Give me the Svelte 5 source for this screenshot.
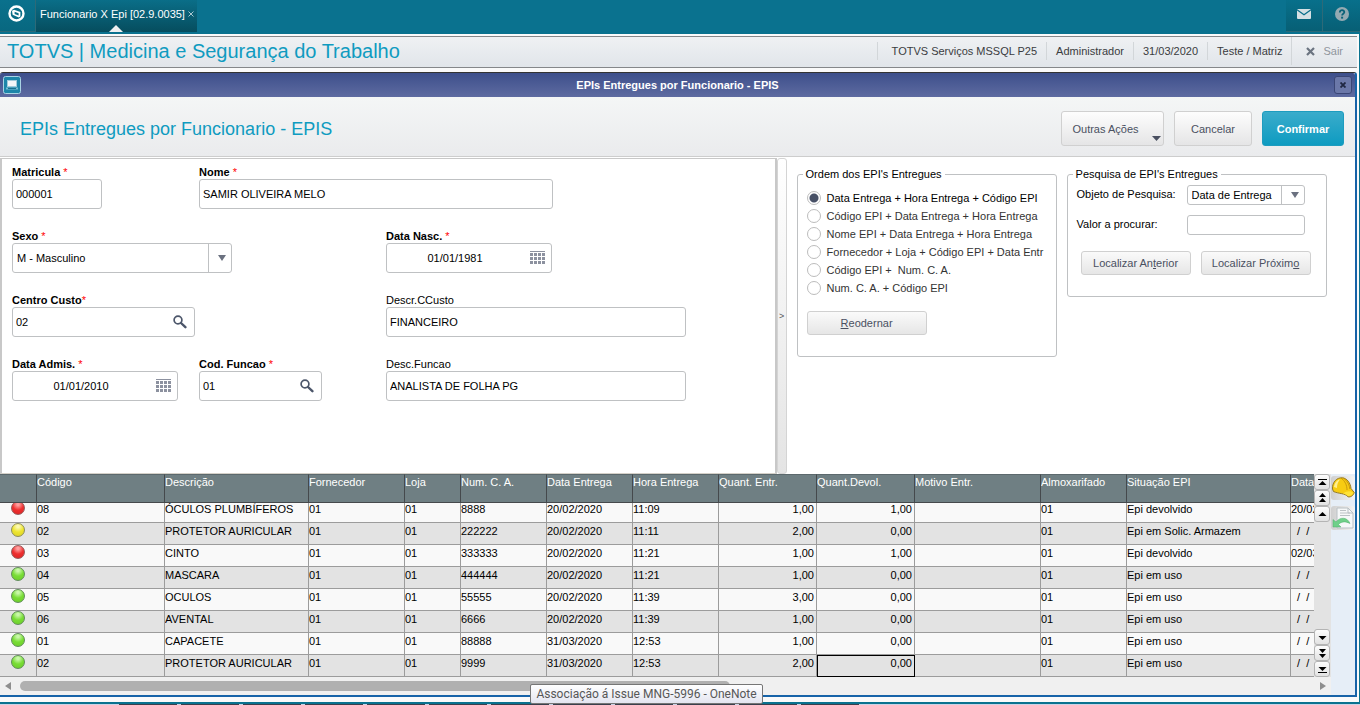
<script lang="ts">
    import { onMount } from "svelte";

    const session = [
        "TOTVS Serviços MSSQL P25",
        "Administrador",
        "31/03/2020",
        "Teste / Matriz",
    ];

    const orders = [
        "Data Entrega + Hora Entrega + Código EPI",
        "Código EPI + Data Entrega + Hora Entrega",
        "Nome EPI + Data Entrega + Hora Entrega",
        "Fornecedor + Loja + Código EPI + Data Entr",
        "Código EPI +\u00a0 Num. C. A.",
        "Num. C. A. + Código EPI",
    ];
    let order = $state(orders[0]);

    const columns = [
        { title: "", width: 37 },
        { title: "Código", width: 128 },
        { title: "Descrição", width: 144 },
        { title: "Fornecedor", width: 96 },
        { title: "Loja", width: 56 },
        { title: "Num. C. A.", width: 86 },
        { title: "Data Entrega", width: 86 },
        { title: "Hora Entrega", width: 86 },
        { title: "Quant. Entr.", width: 98 },
        { title: "Quant.Devol.", width: 98 },
        { title: "Motivo Entr.", width: 126 },
        { title: "Almoxarifado", width: 86 },
        { title: "Situação EPI", width: 164 },
        { title: "Data Devol.", width: 86 },
    ];
    const tableWidth = columns.reduce((sum, c) => sum + c.width, 0);

    const none = "\u00a0 /\u00a0 /";
    const rows = [
        ["red", "08", "ÓCULOS PLUMBÍFEROS", "01", "01", "8888", "20/02/2020", "11:09", "1,00", "1,00", "", "01", "Epi devolvido", "20/02/2020"],
        ["yellow", "02", "PROTETOR AURICULAR", "01", "01", "222222", "20/02/2020", "11:11", "2,00", "0,00", "", "01", "Epi em Solic. Armazem", none],
        ["red", "03", "CINTO", "01", "01", "333333", "20/02/2020", "11:21", "1,00", "1,00", "", "01", "Epi devolvido", "02/03/2020"],
        ["green", "04", "MASCARA", "01", "01", "444444", "20/02/2020", "11:21", "1,00", "0,00", "", "01", "Epi em uso", none],
        ["green", "05", "OCULOS", "01", "01", "55555", "20/02/2020", "11:39", "3,00", "0,00", "", "01", "Epi em uso", none],
        ["green", "06", "AVENTAL", "01", "01", "6666", "20/02/2020", "11:39", "1,00", "0,00", "", "01", "Epi em uso", none],
        ["green", "01", "CAPACETE", "01", "01", "88888", "31/03/2020", "12:53", "1,00", "0,00", "", "01", "Epi em uso", none],
        ["green", "02", "PROTETOR AURICULAR", "01", "01", "9999", "31/03/2020", "12:53", "2,00", "0,00", "", "01", "Epi em uso", none],
    ];

    // the grid opens on its last row
    let viewport: HTMLDivElement;
    onMount(() => {
        viewport.scrollTop = viewport.scrollHeight;
    });
</script>

{#snippet magnifier()}
    <svg width="14" height="14" viewBox="0 0 14 14">
        <circle cx="5" cy="5" r="3.9" fill="none" stroke="#4c566a" stroke-width="1.7" />
        <path d="M8 8L12.4 12.2" stroke="#4c566a" stroke-width="2.4" stroke-linecap="round" />
    </svg>
{/snippet}

{#snippet calendar()}
    <svg width="15" height="14" viewBox="0 0 15 14" fill="#8c919f">
        <rect width="15" height="1" />
        {#each [2, 6, 10] as y}
            {#each [0, 4, 8, 12] as x}
                <rect {x} {y} width="3" height="3" />
            {/each}
        {/each}
    </svg>
{/snippet}

<div class="desktop">
    <header class="topbar">
        <button class="home" aria-label="Início">
            <svg width="17" height="17" viewBox="0 0 17 17">
                <circle cx="8.5" cy="8.5" r="7" fill="none" stroke="#fff" stroke-width="2.4" />
                <path d="M4 5.8L6 4.8L12.4 7V11.4L10.8 12.4L4.6 9.8Z" fill="#fff" />
                <path d="M6.6 6.8L10.6 8.2V10.4L6.6 9Z" fill="#0a6c86" />
            </svg>
        </button>
        <div class="tab">
            <span>Funcionario X Epi [02.9.0035]</span>
            <button class="tab-close" aria-label="Fechar aba">
                <svg width="6" height="6" viewBox="0 0 6 6">
                    <path d="M0.5 0.5L5.5 5.5M5.5 0.5L0.5 5.5" stroke="#a9c6cf" />
                </svg>
            </button>
        </div>
        <button class="top-icon mail" aria-label="Mensagens">
            <svg width="14" height="10" viewBox="0 0 14 10">
                <rect width="14" height="10" rx="1" fill="#d5e0e4" />
                <path d="M0 0.8L7 5.8L14 0.8" fill="none" stroke="#0a6f8b" stroke-width="1.3" />
            </svg>
        </button>
        <button class="top-icon" aria-label="Ajuda">
            <svg width="14" height="14" viewBox="0 0 14 14">
                <circle cx="7" cy="7" r="7" fill="#94aab2" />
                <path d="M4.8 5.4C4.8 2.4 9.4 2.5 9.3 5.3C9.2 6.8 7.1 6.8 7.1 8.6" fill="none" stroke="#0a6278" stroke-width="1.8" />
                <rect x="6.1" y="9.7" width="2" height="1.9" fill="#0a6278" />
            </svg>
        </button>
    </header>

    <div class="shell">
        <div class="infobar">
            <h1>TOTVS | Medicina e Segurança do Trabalho</h1>
            <div class="session">
                {#each session as item}
                    <span>{item}</span>
                {/each}
            </div>
            <button class="exit">
                <svg width="9" height="9" viewBox="0 0 9 9">
                    <path d="M1 1L8 8M8 1L1 8" stroke="#6b7480" stroke-width="2.2" />
                </svg>
                Sair
            </button>
        </div>

        <section class="window">
            <div class="titlebar">
                <svg class="app-icon" width="18" height="18" viewBox="0 0 18 18">
                    <rect x="0.5" y="0.5" width="17" height="17" rx="2" fill="#1d86a9" stroke="#a9d3e4" />
                    <rect x="4.5" y="4.5" width="9" height="6" fill="#f4f6f8" stroke="#a3cbdb" />
                    <path d="M3 11.5H15V13.5H3Z" fill="#78bcd2" />
                    <path d="M5 12.5H13" stroke="#1a6f8e" />
                </svg>
                <h2>EPIs Entregues por Funcionario - EPIS</h2>
                <button class="close" aria-label="Fechar">
                    <svg width="6" height="6" viewBox="0 0 6 6">
                        <path d="M0.5 0.5L5.5 5.5M5.5 0.5L0.5 5.5" stroke="#1f2742" stroke-width="1.8" />
                    </svg>
                </button>
            </div>

            <div class="heading">
                <h3>EPIs Entregues por Funcionario - EPIS</h3>
                <button class="action more">
                    Outras Ações
                    <svg width="9" height="5" viewBox="0 0 9 5"><path d="M0 0H9L4.5 5Z" fill="#4a5061" /></svg>
                </button>
                <button class="action cancel">Cancelar</button>
                <button class="action confirm">Confirmar</button>
            </div>

            <div class="panels">
                <form class="employee">
                    <div class="field">
                        <label class="required" for="matricula">Matricula <i>*</i></label>
                        <div class="box w90"><input id="matricula" value="000001" /></div>
                    </div>
                    <div class="field name">
                        <label class="required" for="nome">Nome <i>*</i></label>
                        <div class="box w354"><input id="nome" value="SAMIR OLIVEIRA MELO" /></div>
                    </div>
                    <div class="field wide">
                        <label class="required" for="sexo">Sexo <i>*</i></label>
                        <div class="box combo w220">
                            <select id="sexo">
                                <option>M - Masculino</option>
                                <option>F - Feminino</option>
                            </select>
                        </div>
                    </div>
                    <div class="field">
                        <label class="required" for="nasc">Data Nasc. <i>*</i></label>
                        <div class="box date w166">
                            <input id="nasc" value="01/01/1981" />
                            <button type="button" aria-label="Calendário">{@render calendar()}</button>
                        </div>
                    </div>
                    <div class="field wide">
                        <label class="required" for="centro">Centro Custo<i>*</i></label>
                        <div class="box w183">
                            <input id="centro" value="02" />
                            <button type="button" aria-label="Pesquisar">{@render magnifier()}</button>
                        </div>
                    </div>
                    <div class="field">
                        <label for="descr-custo">Descr.CCusto</label>
                        <div class="box w300"><input id="descr-custo" value="FINANCEIRO" /></div>
                    </div>
                    <div class="field">
                        <label class="required" for="admis">Data Admis. <i>*</i></label>
                        <div class="box date w166">
                            <input id="admis" value="01/01/2010" />
                            <button type="button" aria-label="Calendário">{@render calendar()}</button>
                        </div>
                    </div>
                    <div class="field">
                        <label class="required" for="funcao">Cod. Funcao <i>*</i></label>
                        <div class="box w123">
                            <input id="funcao" value="01" />
                            <button type="button" aria-label="Pesquisar">{@render magnifier()}</button>
                        </div>
                    </div>
                    <div class="field">
                        <label for="descr-funcao">Desc.Funcao</label>
                        <div class="box w300"><input id="descr-funcao" value="ANALISTA DE FOLHA PG" /></div>
                    </div>
                </form>

                <button class="splitter" aria-label="Recolher painel">&gt;</button>

                <div class="tools">
                    <fieldset class="order">
                        <legend>Ordem dos EPI's Entregues</legend>
                        {#each orders as option}
                            <label class:current={order === option}>
                                <input type="radio" name="order" value={option} bind:group={order} />
                                {option}
                            </label>
                        {/each}
                        <button class="small"><span><u>R</u>eodernar</span></button>
                    </fieldset>

                    <fieldset class="search">
                        <legend>Pesquisa de EPI's Entregues</legend>
                        <div class="line">
                            <label for="objeto">Objeto de Pesquisa:</label>
                            <div class="box combo">
                                <select id="objeto">
                                    <option>Data de Entrega</option>
                                    <option>Código EPI</option>
                                </select>
                            </div>
                        </div>
                        <div class="line">
                            <label for="valor">Valor a procurar:</label>
                            <div class="box"><input id="valor" /></div>
                        </div>
                        <div class="buttons">
                            <button class="small"><span>Localizar An<u>t</u>erior</span></button>
                            <button class="small"><span>Localizar Próxim<u>o</u></span></button>
                        </div>
                    </fieldset>
                </div>
            </div>

            <div class="grid-area">
                <div class="grid">
                    <div class="grid-body">
                        <div class="viewport" bind:this={viewport}>
                            <table style="width: {tableWidth}px">
                                <colgroup>
                                    {#each columns as column}
                                        <col style="width: {column.width}px" />
                                    {/each}
                                </colgroup>
                                <thead>
                                    <tr>
                                        {#each columns as column}
                                            <th>{column.title}</th>
                                        {/each}
                                    </tr>
                                </thead>
                                <tbody>
                                    {#each rows as row, r}
                                        <tr>
                                            {#each row as cell, c}
                                                {#if c === 0}
                                                    <td class="status"><span class="ball {cell}"></span></td>
                                                {:else}
                                                    <td
                                                        class:number={c === 8 || c === 9}
                                                        class:focused={r === rows.length - 1 && c === 9}
                                                    >{cell}</td>
                                                {/if}
                                            {/each}
                                        </tr>
                                    {/each}
                                </tbody>
                            </table>
                        </div>
                        <div class="rail">
                            <button aria-label="Primeiro">
                                <svg width="9" height="7" viewBox="0 0 9 7"><path d="M0 0H9V1H0ZM4.5 2L8.5 6H0.5Z" /></svg>
                            </button>
                            <button aria-label="Página anterior">
                                <svg width="9" height="10" viewBox="0 0 9 10"><path d="M4.5 0L8 4H1ZM4.5 5L8 9H1Z" /></svg>
                            </button>
                            <button aria-label="Anterior">
                                <svg width="9" height="5" viewBox="0 0 9 5"><path d="M4.5 0L8.5 4H0.5Z" /></svg>
                            </button>
                            <button class="down" aria-label="Próximo">
                                <svg width="9" height="5" viewBox="0 0 9 5"><path d="M4.5 5L8.5 1H0.5Z" /></svg>
                            </button>
                            <button aria-label="Próxima página">
                                <svg width="9" height="10" viewBox="0 0 9 10"><path d="M4.5 5L8 1H1ZM4.5 10L8 6H1Z" /></svg>
                            </button>
                            <button aria-label="Último">
                                <svg width="9" height="7" viewBox="0 0 9 7"><path d="M0 6H9V7H0ZM4.5 5L8.5 1H0.5Z" /></svg>
                            </button>
                        </div>
                    </div>
                    <div class="hscroll">
                        <svg width="6" height="8" viewBox="0 0 6 8"><path d="M6 0V8L0 4Z" fill="#8e8e8e" /></svg>
                        <div class="track"><div class="thumb"></div></div>
                        <svg width="6" height="8" viewBox="0 0 6 8"><path d="M0 0V8L6 4Z" fill="#8e8e8e" /></svg>
                    </div>
                </div>
                <div class="sidebar">
                    <button aria-label="EPI">
                        <svg width="24" height="24" viewBox="0 0 24 24">
                            <path d="M1.500 13C1 6 6 1.500 11 1.800C16 2 19.500 7 20 12.500L23.300 16.500C22.500 19.500 19.500 21.500 17 20.800C14 17 8 18 2.500 15.500Z" fill="#f7cc12" stroke="#8a7020" stroke-width="0.9" />
                            <path d="M10 2C14 5 16 9 16 14M12.500 2C16.500 5 18.500 9 18.800 13" fill="none" stroke="#c4930c" stroke-width="0.900" />
                            <path d="M3 11C3.500 7 6 4 9 3.500C7 6 6 8 6 12Z" fill="#ffef8f" />
                            <path d="M12 17.500C16 15 19 14.500 22.300 16.800C21 19.500 19 20.500 17 20C16 18.800 14 18 12 17.500Z" fill="#ffe336" />
                        </svg>
                    </button>
                    <button aria-label="Devolução">
                        <svg width="24" height="24" viewBox="0 0 24 24">
                            <path d="M6 2H17L22 7V22H6Z" fill="#f6f8f9" stroke="#b9c0c4" />
                            <path d="M17 2V7H22" fill="none" stroke="#b9c0c4" />
                            <path d="M9 4.500H15M9 7H19M9 9.500H19" stroke="#bcc2c6" />
                            <path d="M2 13.500V21H10L7.500 18.500C10 15.500 14 15 19 17.500C16.500 11 9 10.500 5 16Z" fill="#6fd089" stroke="#4fae6b" stroke-width="0.5" />
                        </svg>
                    </button>
                </div>
            </div>
        </section>
    </div>

    <footer class="taskbar">
        <span></span><span></span><span></span><span></span><span></span>
        <span></span><span></span><span></span><span></span><span></span><span></span><span></span>
    </footer>
    <div class="tooltip" role="tooltip">Associação á Issue MNG-5996 - OneNote</div>
</div>

<style>
    :global(body) {
        background: #d3dcec;
    }

    .desktop {
        position: relative;
        font-family: "Liberation Sans", Arial, sans-serif;
        font-size: 11px;
        line-height: 14px;
        color: #000;
    }

    button,
    input,
    select {
        font: inherit;
        color: inherit;
        margin: 0;
        padding: 0;
        border: 0;
        background: none;
    }

    button {
        display: flex;
        align-items: center;
        justify-content: center;
    }

    svg {
        display: block;
        flex: none;
    }

    h1,
    h2,
    h3 {
        margin: 0;
    }

    /* Top bar */
    .topbar {
        display: flex;
        height: 34px;
        box-sizing: border-box;
        padding-bottom: 2px;
        background: #0a728f;
    }

    .home {
        width: 36px;
        box-sizing: border-box;
        padding-bottom: 4px;
        padding-right: 2px;
        border-right: 1px solid #2d6a78;
        border-bottom: 1px solid #2d6a78;
        background: linear-gradient(#0a718d, #086880);
    }

    .tab {
        position: relative;
        display: flex;
        align-items: center;
        justify-content: space-between;
        width: 161px;
        box-sizing: border-box;
        padding: 0 3px 4px 4px;
        color: #fff;
        white-space: nowrap;
        background: linear-gradient(#0a6e88, #064d5e);
    }

    .tab::after {
        content: "";
        position: absolute;
        left: 73px;
        bottom: 0;
        border: 7px solid transparent;
        border-top: 0;
        border-bottom-color: #eef0f1;
    }

    .top-icon {
        width: 37px;
        box-sizing: border-box;
        padding-bottom: 4px;
        border-bottom: 1px solid #2d6a78;
        background: linear-gradient(#08708b, #075f75);
    }

    .mail {
        margin-left: auto;
        border-right: 1px solid #2d6a78;
    }

    .shell {
        border-right: 1px solid #0a728f;
        border-bottom: 2px solid #0a728f;
        padding: 2px 2px 5px 0;
        background: #fafafa;
    }

    /* Session bar */
    .infobar {
        display: flex;
        align-items: center;
        height: 28px;
        padding-bottom: 2px;
        border-top: 1px solid #85878a;
        border-bottom: 1px solid #85878a;
        background: linear-gradient(#eff1f3, #e1e5ea);
        color: #3a3c40;
    }

    .infobar h1 {
        padding-left: 7px;
        font-size: 20px;
        font-weight: normal;
        line-height: 24px;
        color: #0f9bc0;
        white-space: nowrap;
    }

    .session {
        display: flex;
        margin-left: auto;
    }

    .session span {
        padding: 2px 9px;
        border-left: 1px solid #d2d6d9;
        white-space: nowrap;
    }

    .session span:first-child {
        padding-left: 14px;
    }

    .exit {
        align-self: stretch;
        gap: 8px;
        padding: 0 14px;
        border-left: 1px solid #d2d6d9;
        color: #8f959c;
    }

    /* Window */
    .window {
        margin-top: 4px;
        border-top: 1px solid #333;
        border-right: 2px solid #1763a8;
        border-bottom: 2px solid #1763a8;
        border-radius: 3px 3px 0 0;
        background: #fff;
    }

    .titlebar {
        display: flex;
        align-items: center;
        height: 24px;
        padding: 0 3px;
        border-radius: 2px 2px 0 0;
        background: linear-gradient(#3d4f8b, #5e6ba1);
        color: #fff;
    }

    .titlebar h2 {
        flex: 1;
        text-align: center;
        font-size: 11px;
    }

    .close {
        width: 18px;
        height: 18px;
        border: 1px solid #3a4676;
        border-radius: 3px;
        background: #6b78a9;
    }

    .heading {
        display: flex;
        align-items: center;
        gap: 10px;
        height: 55px;
        padding: 4px 11px 0 20px;
        border-bottom: 1px solid #cdcdcd;
        background: linear-gradient(#f4f6f6, #eaebed);
    }

    .heading h3 {
        flex: 1;
        font-size: 18px;
        font-weight: normal;
        line-height: 22px;
        color: #0f9bc0;
    }

    .action {
        position: relative;
        height: 35px;
        border: 1px solid #d0d0d0;
        border-radius: 3px;
        background: linear-gradient(#fdfdfd, #e5e5e6);
        color: #4a5061;
    }

    .more {
        width: 103px;
        padding-right: 14px;
    }

    .more svg {
        position: absolute;
        right: 2px;
        bottom: 4px;
    }

    .cancel {
        width: 78px;
    }

    .confirm {
        width: 82px;
        border-color: #1d9cbf;
        background: linear-gradient(#3aaccb, #0e9bc1);
        color: #fff;
        font-weight: bold;
    }

    /* Form */
    .panels {
        display: flex;
        height: 317px;
        box-sizing: border-box;
        padding-top: 1px;
    }

    .employee {
        flex: 777 1 0;
        display: grid;
        grid-template-columns: 187px 187px 1fr;
        align-content: start;
        row-gap: 20px;
        padding: 6px 0 0 10px;
        border: 2px solid #c8c8c8;
        border-top-width: 1px;
        border-bottom: 1px solid #d4d0c8;
    }

    .field label {
        display: block;
    }

    .required {
        font-weight: bold;
    }

    .required i {
        color: #f00;
        font-style: normal;
        font-weight: normal;
    }

    .name,
    .wide {
        grid-column: span 2;
    }

    .box {
        display: flex;
        height: 30px;
        box-sizing: border-box;
        border: 1px solid #bfc1c3;
        border-radius: 3px;
        background: #fff;
    }

    .box input,
    .box select {
        flex: 1;
        min-width: 0;
        padding: 0 3px;
        outline: 0;
    }

    .box select {
        appearance: none;
        padding-left: 4px;
    }

    .box button {
        width: 28px;
    }

    .date input {
        text-align: center;
    }

    .combo {
        position: relative;
    }

    .combo::before {
        content: "";
        position: absolute;
        top: 0;
        bottom: 0;
        right: 22px;
        border-left: 1px solid #bfc1c3;
    }

    .combo::after {
        content: "";
        position: absolute;
        top: 50%;
        right: 5px;
        margin-top: -3px;
        border: 4px solid transparent;
        border-bottom: 0;
        border-top: 6px solid #6b7180;
        pointer-events: none;
    }

    .w90 {
        width: 90px;
    }

    .w123 {
        width: 123px;
    }

    .w166 {
        width: 166px;
    }

    .w183 {
        width: 183px;
    }

    .w220 {
        width: 220px;
    }

    .w300 {
        width: 300px;
    }

    .w354 {
        width: 354px;
    }

    .splitter {
        width: 10px;
        border: 1px solid #d4d4d4;
        border-radius: 3px;
        background: linear-gradient(#fff, #e4e4e4);
        color: #555;
        font-size: 9px;
    }

    /* Ordering and search */
    .tools {
        flex: 569 1 0;
        display: flex;
        align-items: flex-start;
        gap: 10px;
        padding: 9px 0 0 10px;
    }

    fieldset {
        width: 260px;
        box-sizing: border-box;
        margin: 0;
        padding: 0 9px 21px;
        border: 1px solid #bfc1c3;
        border-radius: 3px;
    }

    legend {
        margin-left: -4px;
        padding: 0 3px;
    }

    .order {
        padding-top: 8px;
    }

    .order label {
        display: flex;
        align-items: center;
        gap: 6px;
        height: 18px;
        color: #333;
        white-space: nowrap;
    }

    .order .current {
        color: #000;
    }

    .order input {
        appearance: none;
        width: 14px;
        height: 14px;
        box-sizing: border-box;
        border: 1px solid #bcbcbc;
        border-radius: 50%;
        background: #fff;
    }

    .order input:checked {
        background: radial-gradient(circle, #475066 0 4px, #fff 5px);
    }

    .small {
        height: 24px;
        border: 1px solid #d0d0d0;
        border-radius: 3px;
        background: linear-gradient(#fafafa, #e6e6e6);
        color: #4a5061;
        white-space: nowrap;
    }

    .order .small {
        width: 120px;
        margin-top: 14px;
    }

    .search {
        padding-top: 4px;
    }

    .line {
        display: flex;
        margin-bottom: 10px;
    }

    .line label {
        width: 110px;
        padding-top: 2px;
    }

    .line .box {
        width: 118px;
        height: 20px;
    }

    .buttons {
        display: flex;
        gap: 10px;
        padding: 6px 0 0 4px;
    }

    .buttons .small {
        width: 110px;
    }

    /* Grid */
    .grid-area {
        display: flex;
    }

    .grid {
        flex: 1;
        min-width: 0;
    }

    .grid-body {
        display: flex;
        height: 203px;
    }

    .viewport {
        flex: 1;
        min-width: 0;
        overflow: hidden;
    }

    table {
        table-layout: fixed;
        border-collapse: separate;
        border-spacing: 0;
    }

    th {
        position: sticky;
        top: 0;
        z-index: 1;
        height: 29px;
        box-sizing: border-box;
        padding: 0;
        border-right: 1px solid #45494c;
        border-bottom: 1px solid #45494c;
        border-top: 1px solid #5c696d;
        background: #6f7f83;
        color: #fff;
        font-weight: normal;
        text-align: left;
        vertical-align: top;
        white-space: nowrap;
    }

    td {
        height: 22px;
        box-sizing: border-box;
        padding: 0 2px 6px 0;
        border-right: 1px solid #9c9c9c;
        border-bottom: 1px solid #9c9c9c;
        background: #f9f9f9;
        white-space: nowrap;
        overflow: hidden;
    }

    tr:nth-child(even) td {
        background: #e3e3e3;
    }

    .number {
        text-align: right;
    }

    .focused {
        outline: 1px solid #000;
        outline-offset: -1px;
    }

    .status {
        padding: 0 1px 7px 0;
    }

    .ball {
        display: block;
        width: 14px;
        height: 14px;
        box-sizing: border-box;
        margin: 0 auto;
        border: 1px solid #66806a;
        border-radius: 50%;
    }

    .red {
        border-color: #945a5a;
        background: radial-gradient(circle at 50% 20%, #ff9d9d 10%, #ee2f2f 50%, #d92424);
    }

    .yellow {
        border-color: #8d8d58;
        background: radial-gradient(circle at 50% 20%, #fbf9b0 10%, #eee52f 50%, #d8cf28);
    }

    .green {
        border-color: #5f8d58;
        background: radial-gradient(circle at 50% 20%, #c8f7a8 10%, #78dd35 50%, #6ccb2b);
    }

    .rail {
        display: flex;
        flex-direction: column;
        width: 17px;
        background: #e3e3e3;
    }

    .rail button {
        height: 16px;
        margin-right: 1px;
        border: 1px solid #b4b4b4;
        border-radius: 3px;
        background: linear-gradient(#fdfdfd, #e2e2e2);
    }

    .rail .down {
        margin-top: auto;
    }

    .hscroll {
        display: flex;
        align-items: center;
        gap: 9px;
        height: 18px;
        padding: 0 5px;
        background: #f0f0f0;
    }

    .track {
        flex: 1;
    }

    .thumb {
        width: 55%;
        height: 10px;
        border-radius: 5px;
        background: #b0b0b0;
    }

    .sidebar {
        width: 24px;
        padding-top: 2px;
        background: #e6eef7;
    }

    .sidebar button {
        margin-bottom: 6px;
        background: linear-gradient(90deg, #cfcfcf, #f4f4f4);
        border-radius: 3px;
    }

    /* Desktop taskbar */
    .taskbar {
        display: flex;
        gap: 4px;
        height: 2px;
        padding-left: 119px;
        overflow: hidden;
        background: #ccd3e6;
    }

    .taskbar span {
        width: 58px;
        height: 2px;
        border-top: 1px solid #3b3f4c;
        background: #e9e4f2;
    }

    .tooltip {
        position: absolute;
        left: 39%;
        bottom: 2px;
        height: 18px;
        padding: 0 5px;
        border: 1px solid #767676;
        border-radius: 2px;
        background: linear-gradient(#fff, #e4e5f0);
        color: #575757;
        font-family: Roboto, "Open Sans", sans-serif;
        font-size: 12px;
        line-height: 18px;
        white-space: nowrap;
    }
</style>
